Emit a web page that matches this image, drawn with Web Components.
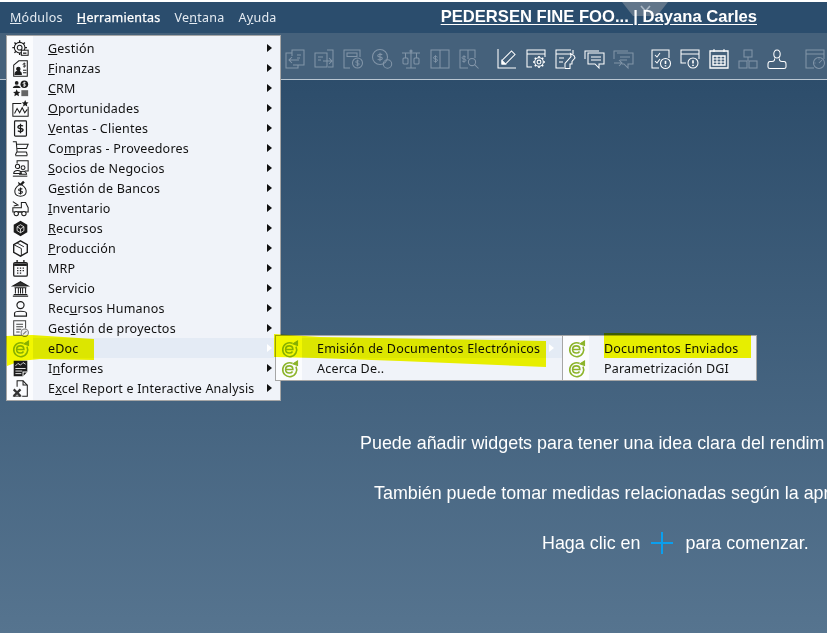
<!DOCTYPE html>
<html lang="es">
<head>
<meta charset="utf-8">
<title>eDoc</title>
<style>
html,body{margin:0;padding:0;overflow:hidden;background:#fff}
</style>
</head>
<body>
<app-shell>
  <top-bar>
    <span slot="menus"><u>M</u>ódulos</span>
    <span slot="menus" class="hot"><u>H</u>erramientas</span>
    <span slot="menus">Ve<u>n</u>tana</span>
    <span slot="menus">A<u>y</u>uda</span>
    <span slot="title">PEDERSEN FINE FOO... | Dayana Carles</span>
  </top-bar>
  <tool-bar></tool-bar>
  <welcome-panel>
    <span slot="one">Puede añadir widgets para tener una idea clara del rendim</span>
    <span slot="two">También puede tomar medidas relacionadas según la apr</span>
    <span slot="before">Haga clic en</span>
    <span slot="after">para comenzar.</span>
  </welcome-panel>
  <pop-menu style="left:6px;top:35px;width:273px">
    <menu-row icon="gestion" arrow><u>G</u>estión</menu-row>
    <menu-row icon="finanzas" arrow><u>F</u>inanzas</menu-row>
    <menu-row icon="crm" arrow><u>C</u>RM</menu-row>
    <menu-row icon="oportunidades" arrow><u>O</u>portunidades</menu-row>
    <menu-row icon="ventas" arrow><u>V</u>entas - Clientes</menu-row>
    <menu-row icon="compras" arrow>Co<u>m</u>pras - Proveedores</menu-row>
    <menu-row icon="socios" arrow><u>S</u>ocios de Negocios</menu-row>
    <menu-row icon="bancos" arrow>G<u>e</u>stión de Bancos</menu-row>
    <menu-row icon="inventario" arrow><u>I</u>nventario</menu-row>
    <menu-row icon="recursos" arrow><u>R</u>ecursos</menu-row>
    <menu-row icon="produccion" arrow><u>P</u>roducción</menu-row>
    <menu-row icon="mrp" arrow>MRP</menu-row>
    <menu-row icon="servicio" arrow>Servicio</menu-row>
    <menu-row icon="rh" arrow>Rec<u>u</u>rsos Humanos</menu-row>
    <menu-row icon="proyectos" arrow>Ges<u>t</u>ión de proyectos</menu-row>
    <menu-row icon="edoc" arrow hot>eDoc</menu-row>
    <menu-row icon="informes" arrow>I<u>n</u>formes</menu-row>
    <menu-row icon="excel" arrow>E<u>x</u>cel Report e Interactive Analysis</menu-row>
  </pop-menu>
  <pop-menu style="left:275px;top:335px;width:286px">
    <menu-row icon="edoc" arrow hot>Emisión de Documentos Electrónicos</menu-row>
    <menu-row icon="edoc">Acerca De..</menu-row>
  </pop-menu>
  <pop-menu style="left:562px;top:335px;width:193px">
    <menu-row icon="edoc">Documentos Enviados</menu-row>
    <menu-row icon="edoc">Parametrización DGI</menu-row>
  </pop-menu>
  <marker-overlay></marker-overlay>
</app-shell>
<script>
const dollar=(x,y,s=1)=>`<g transform="translate(${x} ${y}) scale(${s})"><path d="M2.2-2C1.5-3.2-2.3-3.3-2.3-1.2C-2.3.8 2.3-.8 2.3 1.2C2.3 3.3-1.5 3.2-2.3 2M0-4.2V4.2"/></g>`;
const gear=(x,y,r)=>{let t='';for(let i=0;i<8;i++){const a=i*Math.PI/4,c=Math.cos(a),s=Math.sin(a);t+=`M${(x+c*r*.72).toFixed(1)} ${(y+s*r*.72).toFixed(1)}L${(x+c*r).toFixed(1)} ${(y+s*r).toFixed(1)}`;}return `<path d="${t}" stroke-width="1.6"/><circle cx="${x}" cy="${y}" r="${(r*.72).toFixed(1)}"/><circle cx="${x}" cy="${y}" r="${(r*.32).toFixed(1)}"/>`;};
const alert=(x,y,r)=>`<circle cx="${x}" cy="${y}" r="${r}"/><path d="M${x} ${y-r*.55}V${y+r*.1}M${x} ${y+r*.35}V${y+r*.6}" stroke-width="1.6"/>`;
const person=(x,y,s)=>`<circle cx="${x}" cy="${y}" r="${s}"/><path d="M${x-s*1.8} ${y+s*3.4}C${x-s*1.8} ${y+s*1.4} ${x+s*1.8} ${y+s*1.4} ${x+s*1.8} ${y+s*3.4}Z"/>`;

const TOOL={
 t1:`<path d="M7 4H1V19H13V16"/><path d="M7 7V1H19V16H8"/><path d="M12 6H16M12 9H15"/><path d="M14 11H4M7 8L4 11L7 14"/>`,
 t2:`<path d="M13 1H19V18H14"/><path d="M1 4H13V18H1Z"/><path d="M4 8H9M4 11H7"/><path d="M9 12H18M15 9L18 12L15 15"/>`,
 t3:`<path d="M7 19H1V1H17V8"/><rect x="4" y="4" width="10" height="3.5"/><circle cx="14.5" cy="14" r="5"/>${dollar(14.5,14,.8)}`,
 t4:`<circle cx="8" cy="8" r="7.5"/>${dollar(8,8,1)}<circle cx="15.5" cy="15" r="4.2"/>`,
 t5:`<path d="M10 2V19M5 19H15M1 4H19"/><circle cx="10" cy="2" r="1"/><path d="M4.5 4V9M15.5 4V9"/><rect x="2" y="9" width="5" height="6" rx="1"/><rect x="13" y="9" width="5" height="6" rx="1"/>`,
 t6:`<rect x="1" y="1" width="18" height="18"/><path d="M10 1V19"/>${dollar(5.5,10,.9)}`,
 t7:`<path d="M9 19H1V1H16V9M9 1V10"/>${dollar(5,10,.9)}<circle cx="13" cy="13" r="3.6"/><path d="M15.6 15.6L19.5 19.5"/>`,
 t8:`<path d="M1 0V19H19"/><path d="M5 15V11.5L14.5 2L18 5.5L8.5 15Z"/><path d="M5 15V11.5L8.5 15Z" fill="currentColor"/>`,
 t9:`<path d="M6 18H1V1H19V8M1 5H19"/>${gear(13,13,6)}`,
 t10:`<path d="M16 1H1V19H9M18 1V5"/><path d="M1 5H16M4 9H9M4 13H8"/><path d="M10 19.5V14.5L16 7.5L15.5 4.5L19 6.5L20 9L17 12.5V15H15V19.5Z"/>`,
 t11:`<path d="M1 10V2H15"/><path d="M4 4H20V15H15V19L11 15H4Z"/><path d="M7 8H17M7 11H17"/>`,
 t12:`<path d="M1 10V2H15"/><path d="M4 4H20V15H15V19L11 15H9"/><path d="M7 8H17M7 11H14"/><path d="M1 14H9M6 11L9 14L6 17"/>`,
 t13:`<path d="M8 19H1V1H18V9"/><path d="M4 6L6 8L9 4M4 12L6 14L9 10"/>${alert(14.5,14.5,5)}`,
 t14:`<path d="M6 14H1V1H19V10M1 5H19"/>${alert(13,14,5)}`,
 t15:`<path d="M1 2H19V19H1Z" stroke-width="1.3"/><path d="M5 0V3M15 0V3"/><path d="M4 7H16V16H4Z" stroke-width="1.4"/><path d="M8 7V16M12 7V16M4 10H16M4 13H16"/>`,
 t16:`<rect x="6" y="1" width="8" height="7"/><rect x="1" y="12" width="8" height="7"/><rect x="11" y="12" width="8" height="7"/><path d="M10 8V12"/>`,
 t17:`<path d="M10 1C7.8 1 6.8 3 6.8 5C6.8 7 7.8 9 10 9C12.2 9 13.2 7 13.2 5C13.2 3 12.2 1 10 1Z"/><path d="M7.5 9.5C8 11 7 12.5 5 12.5H3C1.5 12.5 1 13.5 1 15V18C1 19 1.5 19.5 3 19.5H17C18.5 19.5 19 19 19 18V15C19 13.5 18.5 12.5 17 12.5H15C13 12.5 12 11 12.5 9.5"/>`,
 t18:`<path d="M9 19H1V1H19V10M1 5H19"/><circle cx="14" cy="14" r="5.5"/><path d="M14 14L17 11M14 9.5V10.5M9.5 14H10.5"/>`
};
const INK=`fill="#1c1c1c" stroke="none"`;
const MENU={
 gestion:`${gear(9,9,8.6)}<rect x="11" y="12" width="8" height="6" fill="#fbfcfe"/><path d="M13 15.5H17" stroke-width="1.5"/>`,
 finanzas:`<path d="M2 6L8 1H18V19H2Z"/>${dollar(14.5,6,.7)}<circle cx="7.5" cy="10.5" r="2" fill="#1c1c1c"/><path d="M3.5 17C3.5 12 11 12 11 17Z" fill="#1c1c1c"/><path d="M13 12H17M13 15H17"/>`,
 crm:`<circle cx="5.5" cy="3.5" r="2.2" ${INK}/><path d="M1 9.5C1 5.5 10 5.5 10 9.5Z" ${INK}/><circle cx="14.5" cy="5" r="4.5" ${INK}/><path d="M16 3.2C15 2.7 13 2.8 13 4C13 5.4 16 4.6 16 6C16 7.2 14 7.3 13 6.8M14.5 2V8" stroke="#fff" stroke-width=".9"/><path d="M5.5 11L6.8 13.7L9.8 14L7.6 16L8.2 19L5.5 17.5L2.8 19L3.4 16L1.2 14L4.2 13.7Z" ${INK}/><rect x="11" y="12" width="8" height="7" fill="#666" stroke="none"/>`,
 oportunidades:`<path d="M11 4H1V19H19V8"/><path d="M3 16L6 10L9 15L12 9L15 15L18 11"/><path d="M15.5 0L16.7 2.6L19.5 2.9L17.4 4.8L18 7.6L15.5 6.2L13 7.6L13.6 4.8L11.5 2.9L14.3 2.6Z" ${INK}/>`,
 ventas:`<rect x="3" y="1" width="14" height="18" rx="1" stroke-width="1.4"/>${dollar(10,10,1.3)}`,
 compras:`<path d="M1 2H5L6 14H17"/><path d="M5 5H19L17 10H6" /><path d="M5.5 14L4 18M17 14L18 18M4 18.5H18"/>`,
 socios:`<path d="M6 4V1H19V13H15"/>${person(6.5,7.5,2.5)}${person(13,9,2.3)}<path d="M1 19H18" stroke-width="1.2"/>`,
 bancos:`<path d="M7 2L10 4L13 1L15 3L12 6H8Z" ${INK}/><path d="M8 6C1 11 2 19 10 19C18 19 19 11 12 6Z"/>${dollar(10,13,1)}`,
 inventario:`<path d="M1 2L7 6L2 7M1 9H11V3H16L19 9V14H1Z"/><circle cx="5" cy="16" r="2.6" fill="#fff"/><circle cx="14" cy="16" r="2.6" fill="#fff"/><path d="M7 14H12"/>`,
 recursos:`<path d="M10 1L18 5.5V14.5L10 19L2 14.5V5.5Z" ${INK}/><path d="M6 8L10 5.5L14 8V12.5L10 15L6 12.5ZM6 8L10 10.5L14 8M10 10.5V15" stroke="#fff" stroke-width=".9"/>`,
 produccion:`<path d="M10 1L18 5.5V14.5L10 19L2 14.5V5.5Z" stroke-width="1.6"/><path d="M2 5.5L11 10V19M6 3.5L14 8" stroke-width="1.1"/>`,
 mrp:`<rect x="2" y="3" width="16" height="16" rx="1.5" stroke-width="1.5"/><path d="M2.5 5.5H17.5" stroke-width="3"/><path d="M6 0V3M14 0V3" stroke-width="1.6"/><path d="M6 9.5H7.5M9.2 9.5H10.8M12.5 9.5H14M6 12.5H7.5M9.2 12.5H10.8M12.5 12.5H14M6 15.5H7.5M9.2 15.5H10.8" stroke-width="1.6"/>`,
 servicio:`<path d="M10 2L19 7H1Z" fill="#333"/><path d="M3 9H17M4 9.5V16M7.5 9.5V16M12.5 9.5V16M16 9.5V16M10 9.5V16" stroke-width="1.2"/><path d="M2 17H18M1 19H19" stroke-width="1.3"/>`,
 rh:`<circle cx="10" cy="6" r="4.2" stroke-width="1.4"/><path d="M3 19V15.5C3 12.5 17 12.5 17 15.5V19Z" stroke-width="1.4"/>`,
 proyectos:`<path d="M12 18H2V1H16V10" stroke="#444"/><path d="M5 5H13M5 8H13M5 11H11M5 14H9" stroke="#444"/><circle cx="15" cy="15" r="4.3" fill="#eee" stroke="#777"/><path d="M13 17L17 13" stroke="#777"/>`,
 informes:`<path d="M2 1H18V14L13 19H2Z" ${INK}/><path d="M4 7L7 4L10 6L13 3L16 5" stroke="#fff" stroke-width=".9"/><path d="M4 10H16M4 13H12M4 16H11" stroke="#fff" stroke-width="1"/><path d="M13 19V14H18" stroke="#fff"/>`,
 excel:`<path d="M6 8V1H13L18 6V19H12"/><path d="M13 1V6H18"/><path d="M2 11L10 19M10 11L2 19" stroke-width="2.6" stroke="#333"/><path d="M1 19H11" stroke="#333"/>`,
 edoc:`<path d="M13.5 3.9A8.2 8.2 0 1 0 17.6 7.8" stroke="#8cb42a" stroke-width="1.9"/><path d="M14 4.5L19.5 1V6.5Z" fill="#8cb42a" stroke="#8cb42a"/><path d="M5.4 11.2H14C14 8.4 12.2 6.9 9.8 6.9C7.2 6.9 5.4 8.8 5.4 11.2C5.4 13.8 7.4 15.3 9.8 15.3C11.4 15.3 12.8 14.7 13.6 13.5" stroke="#8cb42a" stroke-width="1.8"/>`
};

class AppShell extends HTMLElement{
  constructor(){super();this.attachShadow({mode:'open'}).innerHTML=`<style>
  :host{display:flex;flex-direction:column;position:relative;width:827px;height:633px;overflow:hidden;padding-top:2px;box-sizing:border-box;background:#fff}
  </style><slot></slot>`;}
}
class TopBar extends HTMLElement{
  constructor(){super();this.attachShadow({mode:'open'}).innerHTML=`<style>
  :host{display:flex;align-items:center;position:relative;height:31px;flex:none;background:#2b4d6d;color:#e4ebf2;font:12.5px/1 "Noto Sans",sans-serif}
  .menus{display:flex;padding:2px 0 0 10px;flex:none}
  ::slotted([slot=menus]){margin-right:14px;letter-spacing:.25px}
  ::slotted(.hot){color:#fff;-webkit-text-stroke:.25px #fff}
  .title{margin-left:auto;margin-right:70px;position:relative;font:bold 16.6px/1 "Liberation Sans",sans-serif;color:#fff;text-decoration:underline;text-underline-offset:2px;white-space:nowrap}
  .tab{position:absolute;left:622px;top:0;width:46px;height:14px;background:#62768a;clip-path:polygon(0 0,100% 0,76% 100%,24% 100%)}
  svg{position:absolute;left:640px;top:3px}
  </style><div class="tab"></div><svg width="11" height="8" viewBox="0 0 11 8" fill="none" stroke="#aab7c4" stroke-width="1.6"><path d="M1 1L5.5 6L10 1"/></svg><div class="menus"><slot name="menus"></slot></div><div class="title"><slot name="title"></slot></div>`;}
}
class ToolIcon extends HTMLElement{
  constructor(){super();this.attachShadow({mode:'open'});}
  connectedCallback(){
    this.shadowRoot.innerHTML=`<style>:host{display:block;width:20px;height:20px;color:${this.hasAttribute('dim')?'#8295a8':'#fff'}}svg{display:block;overflow:visible}</style><svg width="20" height="20" viewBox="0 0 20 20" fill="none" stroke="currentColor" stroke-width="1.05">${TOOL[this.getAttribute('name')]}</svg>`;
  }
}
customElements.define('tool-icon',ToolIcon);
class ToolBar extends HTMLElement{
  constructor(){super();
    const groups=[[1,2,3,4,5,6,7],[8,9,10,11,12],[13,14,15,16,17],[18]];
    const dim=new Set([1,2,3,4,5,6,7,12,16,18]);
    const html=groups.map(g=>`<div class="g">${g.map(n=>`<tool-icon name="t${n}"${dim.has(n)?' dim':''}></tool-icon>`).join('')}</div>`).join('');
    this.attachShadow({mode:'open'}).innerHTML=`<style>
    :host{display:flex;flex:none;align-items:center;gap:18px;padding:6px 0 0 285px;height:40px;background:#45617b;border-bottom:1px solid #b9c6d2}
    .g{display:flex;gap:9px}
    </style>${html}`;
  }
}
class WelcomePanel extends HTMLElement{
  constructor(){super();this.attachShadow({mode:'open'}).innerHTML=`<style>
  :host{display:flex;flex-direction:column;flex:1;min-height:0;background:linear-gradient(180deg,#2d4d6b 0,#56748f 100%);color:#fff;font:17.9px/20px "Liberation Sans",sans-serif;padding-top:353px;box-sizing:border-box;white-space:nowrap}
  .l{height:20px;margin-bottom:30px;display:flex;align-items:center}
  .a{padding-left:360px}.b{padding-left:374px}.c{padding-left:542px}
  svg{display:block;margin:0 12px 0 11px}
  </style>
  <div class="l a"><slot name="one"></slot></div>
  <div class="l b"><slot name="two"></slot></div>
  <div class="l c"><slot name="before"></slot><svg width="22" height="22" viewBox="0 0 22 22" stroke="#0a9fee" stroke-width="2"><path d="M0 11H22M11 0V22"/></svg><slot name="after"></slot></div>`;}
}
class PopMenu extends HTMLElement{
  constructor(){super();this.attachShadow({mode:'open'}).innerHTML=`<style>
  :host{display:block;position:absolute;z-index:5;padding:2px 0;border:1px solid #a6a6a6;background:linear-gradient(90deg,#fbfcfe 26px,#f0f3f9 26px);color:#111;font:12.5px/20px "Noto Sans",sans-serif}
  </style><slot></slot>`;}
}
class MenuRow extends HTMLElement{
  constructor(){super();this.attachShadow({mode:'open'});}
  connectedCallback(){
    const arrow=this.hasAttribute('arrow'),hot=this.hasAttribute('hot');
    this.shadowRoot.innerHTML=`<style>
    :host{display:flex;height:20px}
    .i{width:26px;flex:none;display:flex;align-items:center;justify-content:center}
    .r{flex:1;display:flex;align-items:center;padding:0 8px 0 15px;${hot?'background:#e4ebf5;':''}}
    .t{flex:1;white-space:nowrap;letter-spacing:.2px;position:relative;top:1px}
    .a{width:0;height:0;border:4px solid transparent;border-left:5px solid ${hot?'#fff':'#111'};border-right:0}
    svg{display:block;overflow:visible}
    </style><div class="i"><svg width="17" height="17" viewBox="0 0 20 20" fill="none" stroke="#1c1c1c" stroke-width="1.2">${MENU[this.getAttribute('icon')]}</svg></div><div class="r"><div class="t"><slot></slot></div>${arrow?'<div class="a"></div>':''}</div>`;
  }
}
class MarkerOverlay extends HTMLElement{
  constructor(){super();this.attachShadow({mode:'open'}).innerHTML=`<style>
  :host{display:block;position:absolute;inset:0;z-index:9;pointer-events:none;mix-blend-mode:multiply}
  svg{display:block}
  </style><svg width="827" height="633" viewBox="0 0 827 633" fill="#f6fa00">
  <path d="M6 336L32 335L94 339L94 360L40 359L20 361L7 366Z"/>
  <path d="M274 334L320 337L546 341L546 367L400 361L316 358L274 357Z"/>
  <path d="M604 333L620 333L751 335L751 358L700 358L604 358Z"/>
  </svg>`;}
}
customElements.define('app-shell',AppShell);
customElements.define('top-bar',TopBar);
customElements.define('tool-bar',ToolBar);
customElements.define('welcome-panel',WelcomePanel);
customElements.define('pop-menu',PopMenu);
customElements.define('menu-row',MenuRow);
customElements.define('marker-overlay',MarkerOverlay);
</script>
</body>
</html>
